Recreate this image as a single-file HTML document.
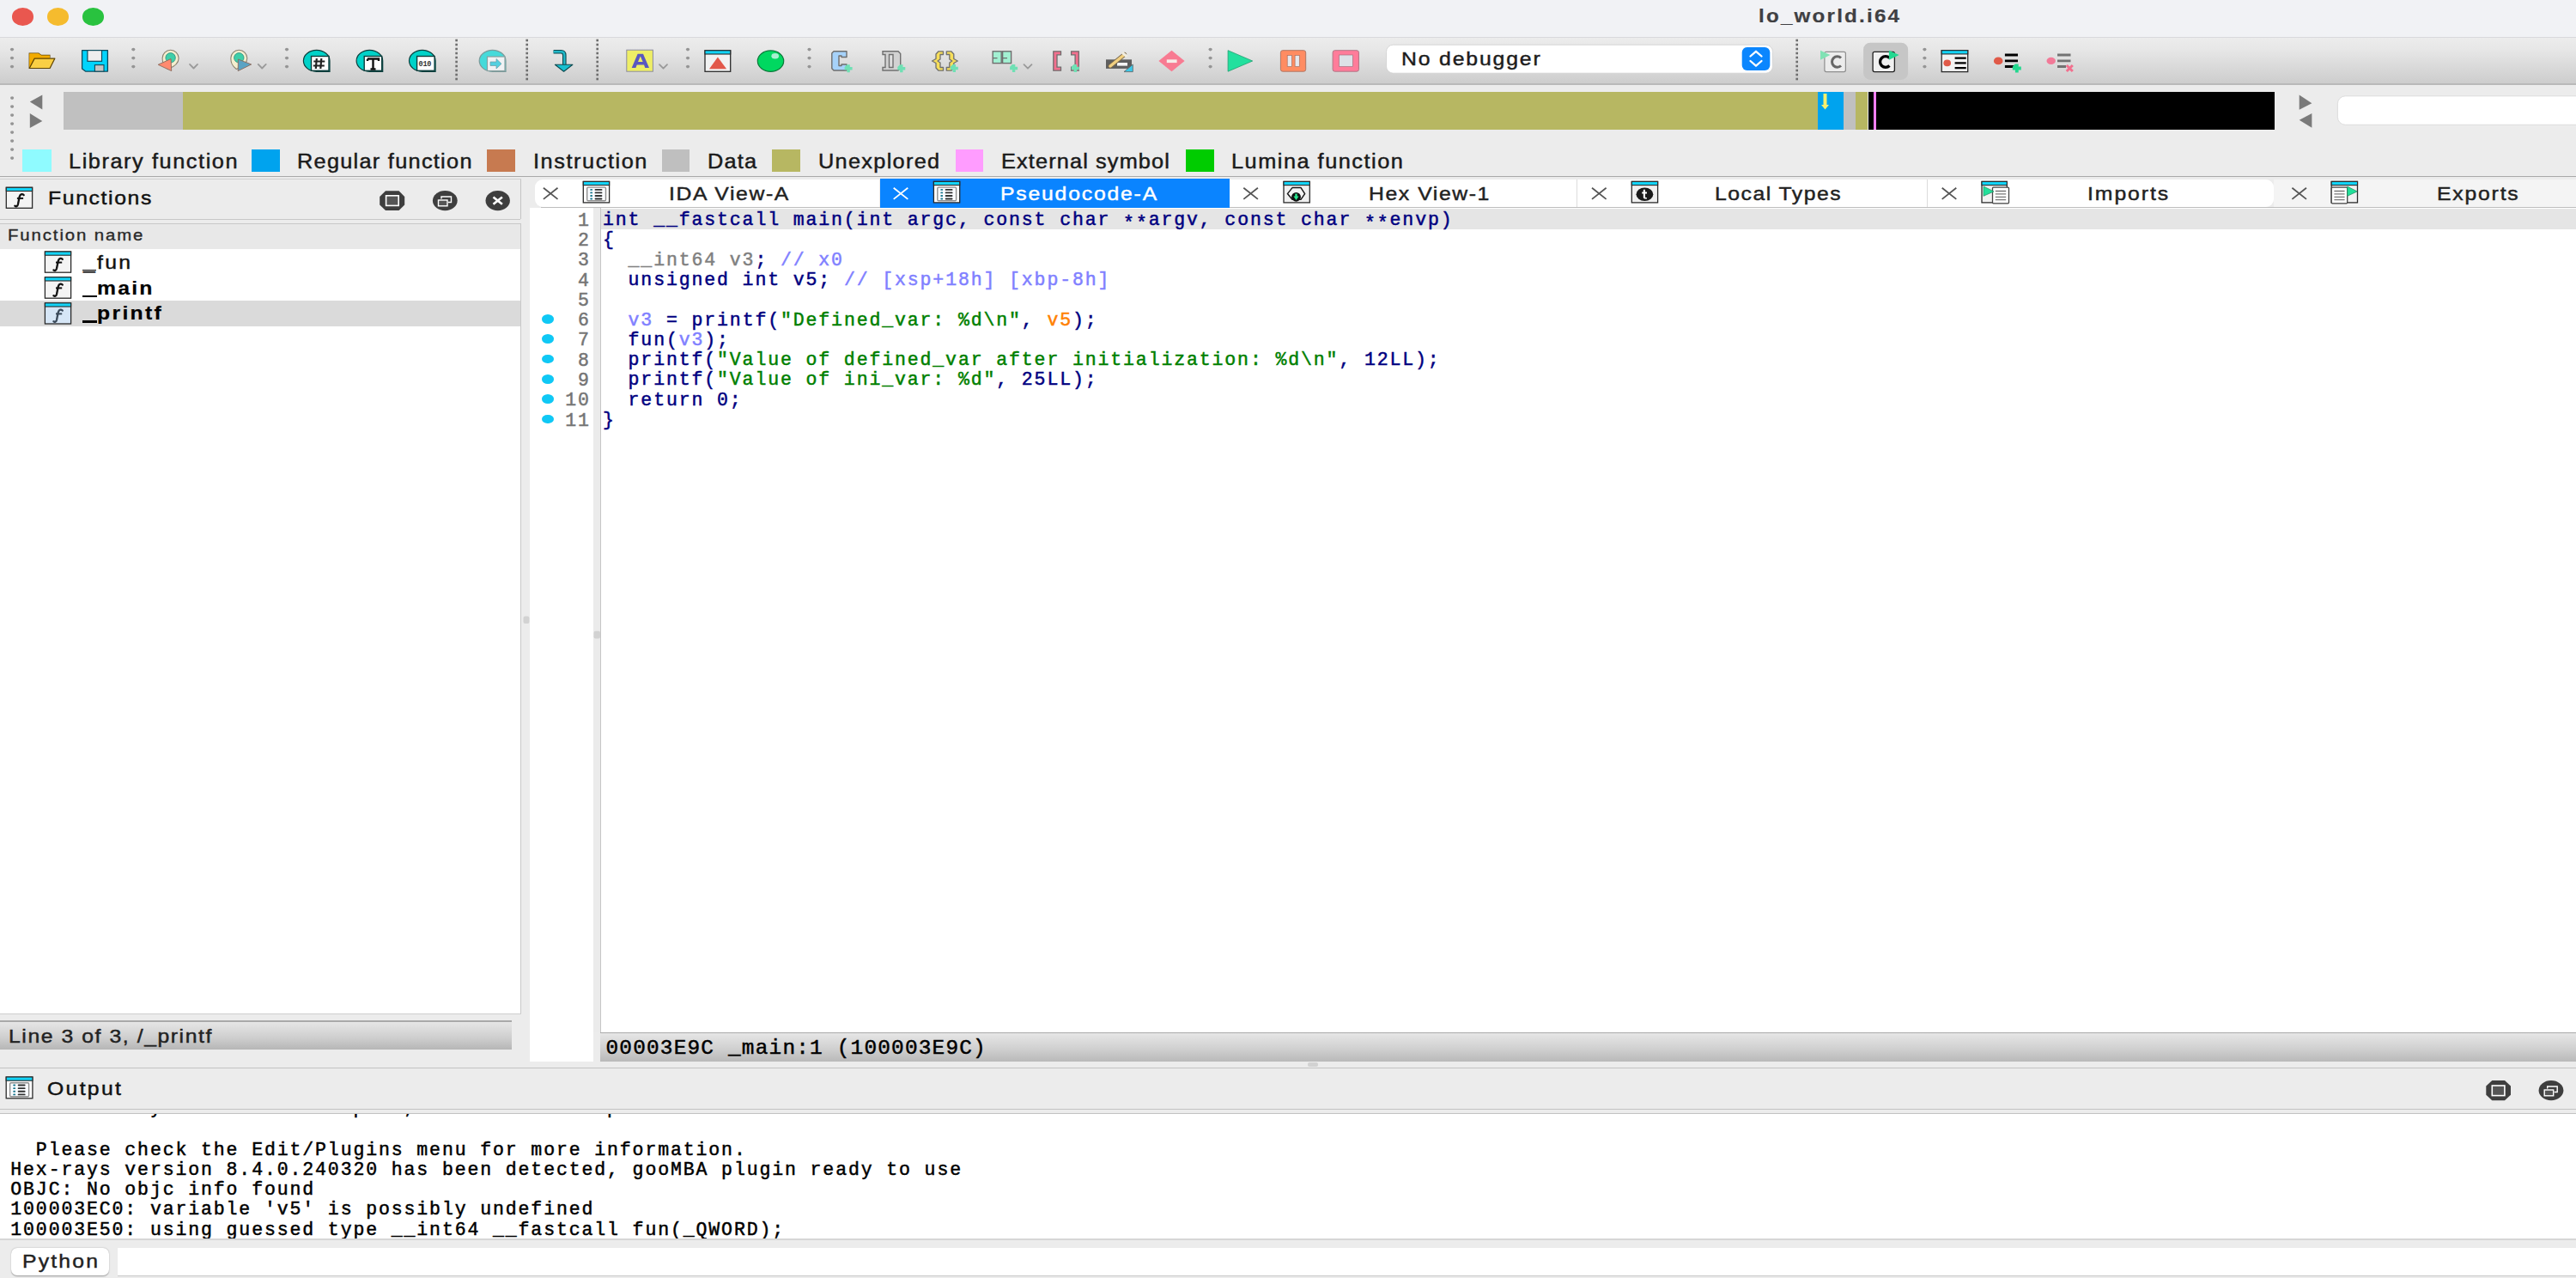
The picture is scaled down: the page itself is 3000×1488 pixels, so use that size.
<!DOCTYPE html><html><head><meta charset="utf-8"><style>
html,body{margin:0;padding:0;width:3000px;height:1488px;overflow:hidden;background:#ececec}
.r,.t{position:absolute}
.t{white-space:pre;margin:0;padding:0}
.code{font:normal 21.50px/21.50px "Liberation Mono", monospace;letter-spacing:1.880px;-webkit-text-stroke:0.5px}
</style></head><body>
<div class="r" style="left:0.0px;top:0.0px;width:3000.0px;height:44.0px;background:#f1f2f5;"></div>
<div class="r" style="left:0.0px;top:43.0px;width:3000.0px;height:1.0px;background:#d9d9dc;"></div>
<div class="r" style="left:14.2px;top:9.2px;width:24.8px;height:20.4px;border-radius:50%;background:#e9574f"></div>
<div class="r" style="left:55.1px;top:9.2px;width:24.8px;height:20.4px;border-radius:50%;background:#f5bb2e"></div>
<div class="r" style="left:96.1px;top:9.2px;width:24.8px;height:20.4px;border-radius:50%;background:#29c23f"></div>
<div class="t" style="left:2048.40px;top:8.18px;font:bold 22.00px/22.00px 'Liberation Sans', sans-serif;color:#3f4043;letter-spacing:2.000px;transform:scaleX(1.1000);transform-origin:0 0;-webkit-text-stroke:0.20px #3f4043;">lo_world.i64</div>
<div class="r" style="left:0.0px;top:44.0px;width:3000.0px;height:53.2px;background:linear-gradient(#ececec,#e7e7e7 25%,#cdcdcd 100%);"></div>
<div class="r" style="left:0.0px;top:97.2px;width:3000.0px;height:1.4px;background:#b9b9b9;"></div>
<div class="r" style="left:0.0px;top:98.6px;width:3000.0px;height:106.4px;background:#ececec;"></div>
<div class="r" style="left:74.0px;top:107.0px;width:139.3px;height:44.0px;background:#c0c0c0;"></div>
<div class="r" style="left:213.3px;top:107.0px;width:1903.3px;height:44.0px;background:#b7b762;"></div>
<div class="r" style="left:2116.6px;top:107.0px;width:30.7px;height:44.0px;background:#00a3ee;"></div>
<div class="r" style="left:2147.3px;top:107.0px;width:14.1px;height:44.0px;background:#c0c0c0;"></div>
<div class="r" style="left:2161.4px;top:107.0px;width:14.1px;height:44.0px;background:#b7b762;"></div>
<div class="r" style="left:2175.5px;top:107.0px;width:473.5px;height:44.0px;background:#000000;"></div>
<div class="r" style="left:2182.0px;top:107.0px;width:2.5px;height:44.0px;background:#ff80ff;"></div>
<div class="r" style="left:26.4px;top:173.8px;width:33.4px;height:25.8px;background:#8ffbff;"></div>
<div class="t" style="left:79.70px;top:176.93px;font:normal 23.00px/23.00px 'Liberation Sans', sans-serif;color:#1a1a1a;letter-spacing:1.430px;transform:scaleX(1.1000);transform-origin:0 0;-webkit-text-stroke:0.45px #1a1a1a;">Library function</div>
<div class="r" style="left:293.0px;top:173.8px;width:32.5px;height:25.8px;background:#00a3ee;"></div>
<div class="t" style="left:346.00px;top:176.93px;font:normal 23.00px/23.00px 'Liberation Sans', sans-serif;color:#1a1a1a;letter-spacing:1.164px;transform:scaleX(1.1000);transform-origin:0 0;-webkit-text-stroke:0.45px #1a1a1a;">Regular function</div>
<div class="r" style="left:567.0px;top:173.8px;width:33.4px;height:25.8px;background:#c77a50;"></div>
<div class="t" style="left:620.70px;top:176.93px;font:normal 23.00px/23.00px 'Liberation Sans', sans-serif;color:#1a1a1a;letter-spacing:1.427px;transform:scaleX(1.1000);transform-origin:0 0;-webkit-text-stroke:0.45px #1a1a1a;">Instruction</div>
<div class="r" style="left:770.8px;top:173.8px;width:32.4px;height:25.8px;background:#bfbfbf;"></div>
<div class="t" style="left:823.50px;top:176.93px;font:normal 23.00px/23.00px 'Liberation Sans', sans-serif;color:#1a1a1a;letter-spacing:1.091px;transform:scaleX(1.1000);transform-origin:0 0;-webkit-text-stroke:0.45px #1a1a1a;">Data</div>
<div class="r" style="left:899.3px;top:173.8px;width:32.9px;height:25.8px;background:#b7b762;"></div>
<div class="t" style="left:952.50px;top:176.93px;font:normal 23.00px/23.00px 'Liberation Sans', sans-serif;color:#1a1a1a;letter-spacing:1.182px;transform:scaleX(1.1000);transform-origin:0 0;-webkit-text-stroke:0.45px #1a1a1a;">Unexplored</div>
<div class="r" style="left:1112.8px;top:173.8px;width:32.0px;height:25.8px;background:#ff9cff;"></div>
<div class="t" style="left:1166.00px;top:176.93px;font:normal 23.00px/23.00px 'Liberation Sans', sans-serif;color:#1a1a1a;letter-spacing:1.032px;transform:scaleX(1.1000);transform-origin:0 0;-webkit-text-stroke:0.45px #1a1a1a;">External symbol</div>
<div class="r" style="left:1380.5px;top:173.8px;width:33.3px;height:25.8px;background:#00cc00;"></div>
<div class="t" style="left:1434.00px;top:176.93px;font:normal 23.00px/23.00px 'Liberation Sans', sans-serif;color:#1a1a1a;letter-spacing:1.377px;transform:scaleX(1.1000);transform-origin:0 0;-webkit-text-stroke:0.45px #1a1a1a;">Lumina function</div>
<div class="r" style="left:0.0px;top:205.0px;width:3000.0px;height:1038.0px;background:#ececec;"></div>
<div class="r" style="left:0.0px;top:205.0px;width:3000.0px;height:1.2px;background:#a9a9a9;"></div>
<div class="r" style="left:606.0px;top:207.5px;width:1.0px;height:47.5px;background:#c4c4c4;"></div>
<div class="r" style="left:0.0px;top:207.5px;width:607.0px;height:1.0px;background:#d0d0d0;"></div>
<div class="r" style="left:606.0px;top:260.4px;width:1.0px;height:920.6px;background:#c8c8c8;"></div>
<div class="r" style="left:0.0px;top:255.0px;width:606.0px;height:1.0px;background:#c8c8c8;"></div>
<div class="t" style="left:56.00px;top:220.15px;font:normal 22.50px/22.50px 'Liberation Sans', sans-serif;color:#111;letter-spacing:1.477px;transform:scaleX(1.1000);transform-origin:0 0;-webkit-text-stroke:0.45px #111;">Functions</div>
<div class="r" style="left:0.0px;top:260.0px;width:606.0px;height:1.0px;background:#c8c8c8;"></div>
<div class="r" style="left:0.0px;top:261.0px;width:606.0px;height:28.6px;background:#e8e8e8;"></div>
<div class="t" style="left:8.70px;top:265.34px;font:normal 18.50px/18.50px 'Liberation Sans', sans-serif;color:#2a2a2a;letter-spacing:1.727px;transform:scaleX(1.1000);transform-origin:0 0;-webkit-text-stroke:0.35px #2a2a2a;">Function name</div>
<div class="r" style="left:0.0px;top:289.6px;width:606.0px;height:890.4px;background:#ffffff;"></div>
<div class="r" style="left:0.0px;top:1180.0px;width:607.0px;height:1.0px;background:#cfcfcf;"></div>
<div class="r" style="left:0.0px;top:350.1px;width:606.0px;height:29.5px;background:#dadada;"></div>
<div class="t" style="left:97.20px;top:294.85px;font:normal 22.50px/22.50px 'Liberation Sans', sans-serif;color:#111;letter-spacing:2.061px;transform:scaleX(1.1000);transform-origin:0 0;-webkit-text-stroke:0.45px #111;">_fun</div>
<div class="t" style="left:97.20px;top:324.55px;font:bold 22.50px/22.50px 'Liberation Sans', sans-serif;color:#000;letter-spacing:2.000px;transform:scaleX(1.1000);transform-origin:0 0;-webkit-text-stroke:0.20px #000;">_main</div>
<div class="t" style="left:97.20px;top:354.35px;font:bold 22.50px/22.50px 'Liberation Sans', sans-serif;color:#000;letter-spacing:2.091px;transform:scaleX(1.1000);transform-origin:0 0;-webkit-text-stroke:0.20px #000;">_printf</div>
<div class="r" style="left:96.0px;top:313.6px;width:15.8px;height:1.9px;background:#111;"></div>
<div class="r" style="left:96.0px;top:343.5px;width:17.2px;height:2.8px;background:#000;"></div>
<div class="r" style="left:96.0px;top:373.2px;width:17.2px;height:3.0px;background:#000;"></div>
<div class="r" style="left:0.0px;top:1189.5px;width:596.0px;height:32.9px;background:linear-gradient(#e6e6e6,#cdcdcd 60%,#b6b6b6);"></div>
<div class="r" style="left:0.0px;top:1188.0px;width:596.0px;height:1.5px;background:#a9a9a9;"></div>
<div class="t" style="left:9.90px;top:1195.95px;font:normal 22.50px/22.50px 'Liberation Sans', sans-serif;color:#222;letter-spacing:1.423px;transform:scaleX(1.1000);transform-origin:0 0;-webkit-text-stroke:0.45px #222;">Line 3 of 3, /_printf</div>
<div class="r" style="left:630.0px;top:241.0px;width:2370.0px;height:1.0px;background:#bdbdbd;"></div>
<div class="r" style="left:622.7px;top:209px;width:401.8px;height:32px;background:#fff;border-radius:9px 0 0 9px"></div>
<div class="r" style="left:1024.5px;top:208.2px;width:407.1px;height:33.8px;background:#0a84ff;"></div>
<div class="r" style="left:1431.6px;top:209.0px;width:812.4px;height:32.0px;background:#ffffff;"></div>
<div class="r" style="left:2244px;top:209px;width:404.0px;height:32px;background:#fff;border-radius:0 9px 9px 0"></div>
<div class="r" style="left:2648.0px;top:209.0px;width:352.0px;height:32.0px;background:#f4f4f4;"></div>
<div class="r" style="left:1836.0px;top:209.0px;width:1.0px;height:32.0px;background:#dcdcdc;"></div>
<div class="r" style="left:2244.0px;top:209.0px;width:1.0px;height:32.0px;background:#dcdcdc;"></div>
<div class="t" style="left:779.00px;top:214.55px;font:normal 22.50px/22.50px 'Liberation Sans', sans-serif;color:#222;letter-spacing:1.475px;transform:scaleX(1.1000);transform-origin:0 0;-webkit-text-stroke:0.45px #222;">IDA View-A</div>
<div class="t" style="left:1165.00px;top:214.55px;font:normal 22.50px/22.50px 'Liberation Sans', sans-serif;color:#fff;letter-spacing:1.636px;transform:scaleX(1.1000);transform-origin:0 0;-webkit-text-stroke:0.45px #fff;">Pseudocode-A</div>
<div class="t" style="left:1594.00px;top:214.55px;font:normal 22.50px/22.50px 'Liberation Sans', sans-serif;color:#222;letter-spacing:1.434px;transform:scaleX(1.1000);transform-origin:0 0;-webkit-text-stroke:0.45px #222;">Hex View-1</div>
<div class="t" style="left:1996.50px;top:214.55px;font:normal 22.50px/22.50px 'Liberation Sans', sans-serif;color:#222;letter-spacing:1.364px;transform:scaleX(1.1000);transform-origin:0 0;-webkit-text-stroke:0.45px #222;">Local Types</div>
<div class="t" style="left:2430.80px;top:214.55px;font:normal 22.50px/22.50px 'Liberation Sans', sans-serif;color:#222;letter-spacing:1.773px;transform:scaleX(1.1000);transform-origin:0 0;-webkit-text-stroke:0.45px #222;">Imports</div>
<div class="t" style="left:2838.40px;top:214.55px;font:normal 22.50px/22.50px 'Liberation Sans', sans-serif;color:#222;letter-spacing:1.636px;transform:scaleX(1.1000);transform-origin:0 0;-webkit-text-stroke:0.45px #222;">Exports</div>
<div class="r" style="left:617.0px;top:242.0px;width:74.0px;height:994.0px;background:#ffffff;"></div>
<div class="r" style="left:691.0px;top:242.0px;width:8.0px;height:960.0px;background:#ebebeb;"></div>
<div class="r" style="left:699.0px;top:242.0px;width:1.0px;height:960.0px;background:#c6c6c6;"></div>
<div class="r" style="left:700.0px;top:242.0px;width:2300.0px;height:960.0px;background:#ffffff;"></div>
<div class="r" style="left:700.0px;top:243.0px;width:2300.0px;height:23.6px;background:#e5e5e5;"></div>
<div class="t code" style="left:702px;top:246.03px"><span style="color:#000080">int __fastcall main(int argc, const char <span style="position:relative;top:4.3px">*</span><span style="position:relative;top:4.3px">*</span>argv, const char <span style="position:relative;top:4.3px">*</span><span style="position:relative;top:4.3px">*</span>envp)</span></div>
<div class="t code" style="left:673.10px;top:246.63px;color:#757575">1</div>
<div class="t code" style="left:702px;top:269.33px"><span style="color:#000080">{</span></div>
<div class="t code" style="left:673.10px;top:269.93px;color:#757575">2</div>
<div class="t code" style="left:702px;top:292.63px"><span style="color:#808080">  __int64 v3</span><span style="color:#000080">;</span><span style="color:#8080ff"> // x0</span></div>
<div class="t code" style="left:673.10px;top:293.23px;color:#757575">3</div>
<div class="t code" style="left:702px;top:315.93px"><span style="color:#000080">  unsigned int v5; </span><span style="color:#8080ff">// [xsp+18h] [xbp-8h]</span></div>
<div class="t code" style="left:673.10px;top:316.53px;color:#757575">4</div>
<div class="t code" style="left:702px;top:339.23px"></div>
<div class="t code" style="left:673.10px;top:339.83px;color:#757575">5</div>
<div class="t code" style="left:702px;top:362.53px"><span style="color:#000080">  </span><span style="color:#8080ff">v3</span><span style="color:#000080"> = printf(</span><span style="color:#008000">"Defined_var: %d\n"</span><span style="color:#000080">, </span><span style="color:#ff8000">v5</span><span style="color:#000080">);</span></div>
<div class="t code" style="left:673.10px;top:363.13px;color:#757575">6</div>
<div class="r" style="left:630.5px;top:366.1px;width:14px;height:10.6px;border-radius:50%;background:#0fc8f5"></div>
<div class="t code" style="left:702px;top:385.83px"><span style="color:#000080">  fun(</span><span style="color:#8080ff">v3</span><span style="color:#000080">);</span></div>
<div class="t code" style="left:673.10px;top:386.43px;color:#757575">7</div>
<div class="r" style="left:630.5px;top:389.4px;width:14px;height:10.6px;border-radius:50%;background:#0fc8f5"></div>
<div class="t code" style="left:702px;top:409.13px"><span style="color:#000080">  printf(</span><span style="color:#008000">"Value of defined_var after initialization: %d\n"</span><span style="color:#000080">, 12LL);</span></div>
<div class="t code" style="left:673.10px;top:409.73px;color:#757575">8</div>
<div class="r" style="left:630.5px;top:412.7px;width:14px;height:10.6px;border-radius:50%;background:#0fc8f5"></div>
<div class="t code" style="left:702px;top:432.43px"><span style="color:#000080">  printf(</span><span style="color:#008000">"Value of ini_var: %d"</span><span style="color:#000080">, 25LL);</span></div>
<div class="t code" style="left:673.10px;top:433.03px;color:#757575">9</div>
<div class="r" style="left:630.5px;top:436.0px;width:14px;height:10.6px;border-radius:50%;background:#0fc8f5"></div>
<div class="t code" style="left:702px;top:455.73px"><span style="color:#000080">  return 0;</span></div>
<div class="t code" style="left:658.32px;top:456.33px;color:#757575">10</div>
<div class="r" style="left:630.5px;top:459.3px;width:14px;height:10.6px;border-radius:50%;background:#0fc8f5"></div>
<div class="t code" style="left:702px;top:479.03px"><span style="color:#000080">}</span></div>
<div class="t code" style="left:658.32px;top:479.63px;color:#757575">11</div>
<div class="r" style="left:630.5px;top:482.6px;width:14px;height:10.6px;border-radius:50%;background:#0fc8f5"></div>
<div class="r" style="left:699.0px;top:1202.0px;width:2301.0px;height:1.0px;background:#a9a9a9;"></div>
<div class="r" style="left:699.0px;top:1203.0px;width:2301.0px;height:33.0px;background:linear-gradient(#e6e6e6,#d0d0d0 55%,#b9b9b9);"></div>
<div class="t" style="left:705.50px;top:1208.81px;font:normal 24.40px/24.40px 'Liberation Mono', monospace;color:#000;letter-spacing:1.200px;-webkit-text-stroke:0.50px #000;">00003E9C _main:1 (100003E9C)</div>
<div class="r" style="left:0.0px;top:1242.5px;width:3000.0px;height:1.0px;background:#c2c2c2;"></div>
<div class="r" style="left:0.0px;top:1243.5px;width:3000.0px;height:47.5px;background:#ececec;"></div>
<div class="r" style="left:0.0px;top:1291.0px;width:3000.0px;height:1.0px;background:#c2c2c2;"></div>
<div class="r" style="left:0.0px;top:1296.0px;width:3000.0px;height:1.0px;background:#c2c2c2;"></div>
<div class="r" style="left:0.0px;top:1297.0px;width:3000.0px;height:145.0px;background:#ffffff;"></div>
<div class="t" style="left:55.00px;top:1257.25px;font:normal 22.50px/22.50px 'Liberation Sans', sans-serif;color:#111;letter-spacing:2.109px;transform:scaleX(1.1000);transform-origin:0 0;-webkit-text-stroke:0.45px #111;">Output</div>
<div class="t code" style="left:12.3px;top:1328.53px;color:#000">  Please check the Edit/Plugins menu for more information.</div>
<div class="t code" style="left:12.3px;top:1351.83px;color:#000">Hex-rays version 8.4.0.240320 has been detected, gooMBA plugin ready to use</div>
<div class="t code" style="left:12.3px;top:1375.13px;color:#000">OBJC: No objc info found</div>
<div class="t code" style="left:12.3px;top:1398.43px;color:#000">100003EC0: variable 'v5' is possibly undefined</div>
<div class="t code" style="left:12.3px;top:1421.73px;color:#000">100003E50: using guessed type __int64 __fastcall fun(_QWORD);</div>
<div class="r" style="left:0;top:1297px;width:3000px;height:10px;overflow:hidden"><div class="t code" style="left:12.3px;top:-16.97px;color:#000">  The hotkeys are F5: decompile, Ctrl-F5: decompile all.</div></div>
<div class="r" style="left:0.0px;top:1443.5px;width:3000.0px;height:44.5px;background:#ececec;"></div>
<div class="r" style="left:0.0px;top:1442.0px;width:3000.0px;height:1.5px;background:#d6d6d6;"></div>
<div class="r" style="left:12.6px;top:1453px;width:114px;height:32px;background:#fff;border-radius:7px;box-shadow:0 0.5px 1.5px rgba(0,0,0,.35)"></div>
<div class="t" style="left:25.50px;top:1457.95px;font:normal 22.50px/22.50px 'Liberation Sans', sans-serif;color:#222;letter-spacing:2.000px;transform:scaleX(1.1000);transform-origin:0 0;-webkit-text-stroke:0.45px #222;">Python</div>
<div class="r" style="left:137.4px;top:1452.5px;width:2862.6px;height:32.5px;background:#ffffff;"></div>
<div class="r" style="left:137.4px;top:1485.0px;width:2862.6px;height:1.0px;background:#c8c8c8;"></div>
<svg class="r" style="left:0;top:0" width="3000" height="1488" viewBox="0 0 3000 1488"><ellipse cx="14.0" cy="57.6" rx="2.1" ry="1.8" fill="#959595"/><ellipse cx="14.0" cy="67.6" rx="2.1" ry="1.8" fill="#959595"/><ellipse cx="14.0" cy="77.6" rx="2.1" ry="1.8" fill="#959595"/><path d="M34.2 79.5 V62.2 H45 L48 64.4 H57.9 V67.4" fill="#f2ab00" stroke="#5e4300" stroke-width="1.2"/><path d="M34.2 62.2 H45 L48 64.4 H57.9 V68 H40 L34.2 79.5 Z" fill="#f2ab00"/><path d="M40.2 68.1 H63.9 L58.1 79.5 H34.2 Z" fill="#f9cf45" stroke="#5e4300" stroke-width="1.2" stroke-linejoin="round"/><path d="M95.6 58.6 H125.4 V83.1 H99.5 L95.6 80 Z" fill="#00d4fc" stroke="#0b4a5c" stroke-width="1.3" stroke-linejoin="round"/><rect x="101.9" y="58.6" width="16.6" height="12.7" fill="#eeeeee" stroke="#0b4a5c" stroke-width="1.2"/><rect x="110.4" y="75.6" width="10.6" height="7.5" fill="#c4c4c4" stroke="#0b4a5c" stroke-width="1.1"/><ellipse cx="155.3" cy="57.6" rx="2.1" ry="1.8" fill="#959595"/><ellipse cx="155.3" cy="67.6" rx="2.1" ry="1.8" fill="#959595"/><ellipse cx="155.3" cy="77.6" rx="2.1" ry="1.8" fill="#959595"/><path d="M195.6 80.5 C190.1 76.5 189.1 73 189.1 67.8 A9.5 9.5 0 1 1 208.1 67.8 C208.1 73 205.1 77 195.6 80.5 Z" fill="#f4efcf" stroke="#8a8070" stroke-width="1.1"/><circle cx="198.6" cy="67.3" r="5.7" fill="#3fcfa8" stroke="#2a8a80" stroke-width="0.8"/><path d="M184.2 75.3 L199 68.5 L199.7 82.6 Z" fill="#ff8a70" stroke="#8a6a5a" stroke-width="0.9" stroke-linejoin="round"/><path d="M275.3 80.5 C269.8 76.5 268.8 73 268.8 67.8 A9.5 9.5 0 1 1 287.8 67.8 C287.8 73 284.8 77 275.3 80.5 Z" fill="#f4efcf" stroke="#8a8070" stroke-width="1.1"/><circle cx="278.3" cy="67.3" r="5.7" fill="#3fcfa8" stroke="#2a8a80" stroke-width="0.8"/><path d="M277.4 69 L292.7 75 L277.2 82.6 Z" fill="#5aa3c4" stroke="#8a6a5a" stroke-width="0.9" stroke-linejoin="round"/><path d="M221.0 74.9 L225.5 79.5 L230.0 74.9" stroke="#9a9a9a" stroke-width="1.8" fill="none" stroke-linecap="round" stroke-linejoin="round"/><path d="M300.7 74.9 L305.2 79.5 L309.7 74.9" stroke="#9a9a9a" stroke-width="1.8" fill="none" stroke-linecap="round" stroke-linejoin="round"/><ellipse cx="334.0" cy="57.6" rx="2.1" ry="1.8" fill="#959595"/><ellipse cx="334.0" cy="67.6" rx="2.1" ry="1.8" fill="#959595"/><ellipse cx="334.0" cy="77.6" rx="2.1" ry="1.8" fill="#959595"/><path d="M384.0 83.3 L368.6 83.3 A15.3 12.5 0 1 1 384.0 70.8 Z" fill="#00d2c8" stroke="#0d3e3c" stroke-width="1.2"/><rect x="362.5" y="65.5" width="20.5" height="16.8" fill="#fff" stroke="#0d3e3c" stroke-width="1.4"/><path d="M368.8 68 L367.8 80 M374.3 68 L373.3 80 M365.3 71.5 H378.3 M364.8 76.5 H377.8" stroke="#222" stroke-width="2.2"/><path d="M445.7 83.3 L430.4 83.3 A15.3 12.5 0 1 1 445.7 70.8 Z" fill="#00d2c8" stroke="#0d3e3c" stroke-width="1.2"/><rect x="424.2" y="65.5" width="20.5" height="16.8" fill="#fff" stroke="#0d3e3c" stroke-width="1.4"/><path d="M428.0 68.5 H441.0 V71 M428.0 68.5 V71 M434.5 68.5 V80.5 M431.5 80.5 H437.5" stroke="#111" stroke-width="2.4" fill="none"/><path d="M507.1 83.3 L491.8 83.3 A15.3 12.5 0 1 1 507.1 70.8 Z" fill="#00d2c8" stroke="#0d3e3c" stroke-width="1.2"/><rect x="485.6" y="65.5" width="20.5" height="16.8" fill="#fff" stroke="#0d3e3c" stroke-width="1.4"/><text x="487.6" y="77.4" font-family="Liberation Mono" font-weight="bold" font-size="8.5" fill="#333" letter-spacing="-0.3">010</text><rect x="530.3" y="45.7" width="2.6" height="2.6" fill="#6e6e6e"/><rect x="530.3" y="50.7" width="2.6" height="2.6" fill="#6e6e6e"/><rect x="530.3" y="55.7" width="2.6" height="2.6" fill="#6e6e6e"/><rect x="530.3" y="60.7" width="2.6" height="2.6" fill="#6e6e6e"/><rect x="530.3" y="65.7" width="2.6" height="2.6" fill="#6e6e6e"/><rect x="530.3" y="70.7" width="2.6" height="2.6" fill="#6e6e6e"/><rect x="530.3" y="75.7" width="2.6" height="2.6" fill="#6e6e6e"/><rect x="530.3" y="80.7" width="2.6" height="2.6" fill="#6e6e6e"/><rect x="530.3" y="85.7" width="2.6" height="2.6" fill="#6e6e6e"/><rect x="530.3" y="90.7" width="2.6" height="2.6" fill="#6e6e6e"/><path d="M589.0 83.3 L573.6 83.3 A15.4 12.5 0 1 1 589.0 70.8 Z" fill="#45dada" stroke="#7a9a9a" stroke-width="1.2"/><rect x="567.5" y="66" width="20.5" height="16.5" fill="#f0f2f4" stroke="#8aa0a0" stroke-width="1.2"/><path d="M571 72 H578 V68.5 L584 74.3 L578 80 V76.5 H571 Z" fill="#52d0e0" stroke="#6a9aa0" stroke-width="0.7"/><rect x="612.4" y="45.7" width="2.6" height="2.6" fill="#6e6e6e"/><rect x="612.4" y="50.7" width="2.6" height="2.6" fill="#6e6e6e"/><rect x="612.4" y="55.7" width="2.6" height="2.6" fill="#6e6e6e"/><rect x="612.4" y="60.7" width="2.6" height="2.6" fill="#6e6e6e"/><rect x="612.4" y="65.7" width="2.6" height="2.6" fill="#6e6e6e"/><rect x="612.4" y="70.7" width="2.6" height="2.6" fill="#6e6e6e"/><rect x="612.4" y="75.7" width="2.6" height="2.6" fill="#6e6e6e"/><rect x="612.4" y="80.7" width="2.6" height="2.6" fill="#6e6e6e"/><rect x="612.4" y="85.7" width="2.6" height="2.6" fill="#6e6e6e"/><rect x="612.4" y="90.7" width="2.6" height="2.6" fill="#6e6e6e"/><path d="M644.6 60.3 H653.5 Q657.3 60.3 657.3 64.5 V75.3" stroke="#0d4a50" stroke-width="4.6" fill="none"/><path d="M644.6 60.3 H653.5 Q657.3 60.3 657.3 64.5 V76" stroke="#20b8c8" stroke-width="2.4" fill="none"/><path d="M646.4 75.3 H666.9 L656.6 83.3 Z" fill="#18c0d0" stroke="#0d4a50" stroke-width="1.1" stroke-linejoin="round"/><rect x="694.4" y="45.7" width="2.6" height="2.6" fill="#6e6e6e"/><rect x="694.4" y="50.7" width="2.6" height="2.6" fill="#6e6e6e"/><rect x="694.4" y="55.7" width="2.6" height="2.6" fill="#6e6e6e"/><rect x="694.4" y="60.7" width="2.6" height="2.6" fill="#6e6e6e"/><rect x="694.4" y="65.7" width="2.6" height="2.6" fill="#6e6e6e"/><rect x="694.4" y="70.7" width="2.6" height="2.6" fill="#6e6e6e"/><rect x="694.4" y="75.7" width="2.6" height="2.6" fill="#6e6e6e"/><rect x="694.4" y="80.7" width="2.6" height="2.6" fill="#6e6e6e"/><rect x="694.4" y="85.7" width="2.6" height="2.6" fill="#6e6e6e"/><rect x="694.4" y="90.7" width="2.6" height="2.6" fill="#6e6e6e"/><rect x="729.8" y="58.2" width="30.6" height="25" fill="#eeee66" stroke="#8a8aa0" stroke-width="1"/><path d="M735.7 79 L742.6 62.8 H749 L756 79 H751.3 L750 75.6 H741.7 L740.4 79 Z M743 72 H748.6 L745.8 65.6 Z" fill="#5a58c0" fill-rule="evenodd"/><path d="M768.0 75.1 L772.5 79.7 L777.0 75.1" stroke="#9a9a9a" stroke-width="1.8" fill="none" stroke-linecap="round" stroke-linejoin="round"/><ellipse cx="801.0" cy="57.6" rx="2.1" ry="1.8" fill="#959595"/><ellipse cx="801.0" cy="67.6" rx="2.1" ry="1.8" fill="#959595"/><ellipse cx="801.0" cy="77.6" rx="2.1" ry="1.8" fill="#959595"/><rect x="821.0" y="58.8" width="29.7" height="24.5" fill="#f2f2f2" stroke="#2a2a2a" stroke-width="1.3"/><rect x="821.0" y="58.8" width="29.7" height="4.2" fill="#12d4f8" stroke="#2a2a2a" stroke-width="1.1"/><path d="M826 80.3 L835.9 66.4 L846.1 80.3 Z" fill="#e2584a"/><ellipse cx="897.5" cy="71.1" rx="15.2" ry="12.2" fill="#00d860" stroke="#0a7a3a" stroke-width="1.2"/><ellipse cx="902.7" cy="65.3" rx="4.3" ry="3.2" fill="#a8f0d0"/><ellipse cx="942.5" cy="57.6" rx="2.1" ry="1.8" fill="#959595"/><ellipse cx="942.5" cy="67.6" rx="2.1" ry="1.8" fill="#959595"/><ellipse cx="942.5" cy="77.6" rx="2.1" ry="1.8" fill="#959595"/><path d="M968.8 62 L971 59.8 H986 V66.5 H980 V65 H977 V76.5 H980 V75 H986 V82 H971 L968.8 79.8 Z" fill="#a6d2fa" stroke="#6e6e6e" stroke-width="1.4" stroke-linejoin="round"/><path d="M986.4 75.2 h3.4 v2.8 h2.8 v3.4 h-2.8 v2.8 h-3.4 v-2.8 h-2.8 v-3.4 z" fill="#6fe0b4"/><path d="M1028 59.8 H1046 L1048.7 62.5 V79.5 L1046 82 H1028 V78.5 H1031 V63.5 H1028 Z M1035.5 63.5 V78.5 H1040 V63.5 Z" fill="#d2d2d2" stroke="#707070" stroke-width="1.4" fill-rule="evenodd"/><path d="M1048.1 75.2 h3.4 v2.8 h2.8 v3.4 h-2.8 v2.8 h-3.4 v-2.8 h-2.8 v-3.4 z" fill="#6fe0b4"/><path d="M1093 59.8 H1098.5 V63.5 H1095 V69 L1092 71 L1095 73 V78.5 H1098.5 V82.2 H1093 L1090 79 V73.5 L1085.5 71 L1090 68.5 V63 Z" fill="#f6de5a" stroke="#707070" stroke-width="1.3" stroke-linejoin="round"/><path d="M1107.8 59.8 H1102.3 V63.5 H1105.8 V69 L1108.8 71 L1105.8 73 V78.5 H1102.3 V82.2 H1107.8 L1110.8 79 V73.5 L1115.3 71 L1110.8 68.5 V63 Z" fill="#f6de5a" stroke="#707070" stroke-width="1.3" stroke-linejoin="round"/><path d="M1109.6 75.0 h3.4 v2.8 h2.8 v3.4 h-2.8 v2.8 h-3.4 v-2.8 h-2.8 v-3.4 z" fill="#6fe0b4"/><rect x="1156.2" y="59.8" width="10" height="13.8" fill="#a2f0d2" stroke="#6e6e6e" stroke-width="1.4"/><rect x="1167.6" y="59.8" width="10" height="13.8" fill="#a2f0d2" stroke="#6e6e6e" stroke-width="1.4"/><path d="M1156.2 67.6 H1161.5 M1167.6 67.6 H1173" stroke="#6e6e6e" stroke-width="1.3"/><path d="M1178.9 75.0 h3.4 v2.8 h2.8 v3.4 h-2.8 v2.8 h-3.4 v-2.8 h-2.8 v-3.4 z" fill="#6fe0b4"/><path d="M1192.5 75.1 L1197.0 79.7 L1201.5 75.1" stroke="#9a9a9a" stroke-width="1.8" fill="none" stroke-linecap="round" stroke-linejoin="round"/><path d="M1226.8 59.8 H1235.5 V63.8 H1231 V78.2 H1235.5 V82.2 H1226.8 Z" fill="#f2708e" stroke="#6e6e6e" stroke-width="1.3"/><path d="M1256.3 59.8 H1247.6 V63.8 H1252.1 V78.2 H1247.6 V82.2 H1256.3 Z" fill="#f2708e" stroke="#6e6e6e" stroke-width="1.3"/><path d="M1250.6 75.0 h3.4 v2.8 h2.8 v3.4 h-2.8 v2.8 h-3.4 v-2.8 h-2.8 v-3.4 z" fill="#6fe0b4"/><rect x="1288" y="69.3" width="30" height="10.6" fill="#5e5e5e"/><rect x="1301" y="73" width="12" height="3.6" fill="#f4f4f4"/><path d="M1293 77 L1309.5 63.5" stroke="#7a6a50" stroke-width="5.2" stroke-linecap="round"/><path d="M1293 77 L1309.5 63.5" stroke="#f2d080" stroke-width="3.4" stroke-linecap="round"/><path d="M1307.8 62 L1311.5 65" stroke="#f0ece0" stroke-width="3" stroke-linecap="round"/><path d="M1309 83.6 L1319.3 75 V83.6 Z" fill="#3cc8e8" stroke="#5e5e5e" stroke-width="0.8"/><path d="M1364.5 58.8 L1379.6 71 L1364.5 83.2 L1349.4 71 Z" fill="#f87b92"/><rect x="1358.8" y="69.3" width="11.8" height="3.8" fill="#f6ece8"/><ellipse cx="1409.6" cy="57.6" rx="2.1" ry="1.8" fill="#959595"/><ellipse cx="1409.6" cy="67.6" rx="2.1" ry="1.8" fill="#959595"/><ellipse cx="1409.6" cy="77.6" rx="2.1" ry="1.8" fill="#959595"/><path d="M1430.1 58.7 L1458.7 71 L1430.1 83.2 Z" fill="#22e09e" stroke="#20a070" stroke-width="0.8" stroke-linejoin="round"/><rect x="1491.4" y="58.7" width="29.3" height="24.5" rx="2.5" fill="#ff8c62" stroke="#a87060" stroke-width="0.9"/><rect x="1499.2" y="64.4" width="5.2" height="13.1" fill="#e6e8ee" stroke="#a87060" stroke-width="0.7"/><rect x="1508.1" y="64.4" width="5.2" height="13.1" fill="#e6e8ee" stroke="#a87060" stroke-width="0.7"/><rect x="1552.1" y="58.7" width="30.4" height="24.5" rx="2.5" fill="#ff7c9a" stroke="#a87080" stroke-width="0.9"/><rect x="1559.5" y="64" width="15.9" height="13.5" fill="#dde1e7" stroke="#a87080" stroke-width="0.7"/><rect x="1614.5" y="52.2" width="450" height="33" rx="8" fill="#ffffff" stroke="#cfcfcf" stroke-width="0.8"/><rect x="2028.7" y="55" width="32.6" height="26.9" rx="6" fill="#0b86fe"/><path d="M2038.5 65.5 L2045 59.8 L2051.5 65.5 M2038.5 71 L2045 76.7 L2051.5 71" stroke="#fff" stroke-width="2.3" fill="none" stroke-linecap="round" stroke-linejoin="round"/><rect x="2091.4" y="45.7" width="2.6" height="2.6" fill="#6e6e6e"/><rect x="2091.4" y="50.7" width="2.6" height="2.6" fill="#6e6e6e"/><rect x="2091.4" y="55.7" width="2.6" height="2.6" fill="#6e6e6e"/><rect x="2091.4" y="60.7" width="2.6" height="2.6" fill="#6e6e6e"/><rect x="2091.4" y="65.7" width="2.6" height="2.6" fill="#6e6e6e"/><rect x="2091.4" y="70.7" width="2.6" height="2.6" fill="#6e6e6e"/><rect x="2091.4" y="75.7" width="2.6" height="2.6" fill="#6e6e6e"/><rect x="2091.4" y="80.7" width="2.6" height="2.6" fill="#6e6e6e"/><rect x="2091.4" y="85.7" width="2.6" height="2.6" fill="#6e6e6e"/><rect x="2091.4" y="90.7" width="2.6" height="2.6" fill="#6e6e6e"/><rect x="2124.9" y="60.3" width="24.5" height="23.3" rx="2" fill="#ececec" stroke="#8e8e8e" stroke-width="1.2"/><path d="M2144 67.5 A6.2 6.2 0 1 0 2144 76.5" stroke="#666" stroke-width="3" fill="none"/><path d="M2120 58.7 L2131.4 64 L2120 69.7 Z" fill="#80e2b4"/><rect x="2170.1" y="49.7" width="52" height="43.2" rx="8" fill="#c6c6c6"/><rect x="2181.1" y="60.3" width="25.3" height="23.3" rx="2" fill="#f0f0f0" stroke="#222" stroke-width="1.3"/><path d="M2200.5 67.5 A6.4 6.4 0 1 0 2200.5 76.5" stroke="#000" stroke-width="3.3" fill="none"/><path d="M2199.9 58.7 L2211.7 64 L2199.9 69.7 Z" fill="#22d890"/><ellipse cx="2241.4" cy="57.6" rx="2.1" ry="1.8" fill="#959595"/><ellipse cx="2241.4" cy="67.6" rx="2.1" ry="1.8" fill="#959595"/><ellipse cx="2241.4" cy="77.6" rx="2.1" ry="1.8" fill="#959595"/><rect x="2261.2" y="58.7" width="30.5" height="24.9" fill="#f2f2f2" stroke="#2a2a2a" stroke-width="1.3"/><rect x="2261.2" y="58.7" width="30.5" height="4.2" fill="#12d4f8" stroke="#2a2a2a" stroke-width="1.1"/><ellipse cx="2267.7" cy="73.4" rx="4.3" ry="3.8" fill="#e05a48"/><path d="M2276.6 67.7 H2289.7 M2276.6 73.4 H2289.7 M2276.6 79.1 H2289.7" stroke="#000" stroke-width="2.2"/><ellipse cx="2327.2" cy="70.9" rx="5.3" ry="4.3" fill="#e05a48"/><path d="M2334.9 64 H2350 M2334.9 70.9 H2350 M2334.9 77.5 H2346" stroke="#000" stroke-width="2.8"/><path d="M2346.9 74.5 h3.8 v3.1 h3.1 v3.8 h-3.1 v3.1 h-3.8 v-3.1 h-3.1 v-3.8 z" fill="#22d88e"/><ellipse cx="2388.7" cy="70.9" rx="5.2" ry="4.2" fill="#f27a98"/><path d="M2396 64 H2411.5 M2396 70.9 H2411.5 M2396 77.5 H2406" stroke="#727272" stroke-width="2.8"/><path d="M2406.8 76 L2413.8 83 M2413.8 76 L2406.8 83" stroke="#f2708e" stroke-width="3"/><ellipse cx="14.1" cy="114.1" rx="2.1" ry="1.8" fill="#959595"/><ellipse cx="14.1" cy="124.1" rx="2.1" ry="1.8" fill="#959595"/><ellipse cx="14.1" cy="134.1" rx="2.1" ry="1.8" fill="#959595"/><ellipse cx="14.1" cy="144.1" rx="2.1" ry="1.8" fill="#959595"/><ellipse cx="14.1" cy="154.1" rx="2.1" ry="1.8" fill="#959595"/><ellipse cx="14.1" cy="164.1" rx="2.1" ry="1.8" fill="#959595"/><ellipse cx="14.1" cy="174.1" rx="2.1" ry="1.8" fill="#959595"/><ellipse cx="14.1" cy="184.1" rx="2.1" ry="1.8" fill="#959595"/><path d="M34.8 118.4 L49.3 110.6 V127.4 Z" fill="#7a7a7a"/><path d="M34.8 132.1 L49.3 141.1 L34.8 148.9 Z" fill="#7a7a7a"/><path d="M2677.7 110.4 L2692.4 120.2 L2677.7 127.8 Z" fill="#7a7a7a"/><path d="M2692.4 132 L2677.7 139.7 L2692.4 148.8 Z" fill="#7a7a7a"/><path d="M2123.5 109 H2127.5 V122 H2130 L2125.5 127.6 L2121 122 H2123.5 Z" fill="#f6f070"/><rect x="2722.4" y="111.8" width="300" height="33.5" rx="9" fill="#fff" stroke="#d6d6d6" stroke-width="0.8"/><rect x="7.3" y="218.3" width="30.3" height="24.0" fill="#f4f4f4" stroke="#2a2a2a" stroke-width="1.3"/><rect x="7.3" y="218.3" width="30.3" height="4.2" fill="#12d4f8" stroke="#2a2a2a" stroke-width="1.1"/><path d="M27.7 227.1 C26.7 225.5 23.5 225.7 22.7 229.1 L20.9 237.9 C20.3 240.5 18.5 240.7 17.3 239.7" stroke="#111" stroke-width="2.3" fill="none" stroke-linecap="round"/><path d="M19.9 230.9 H27.1" stroke="#111" stroke-width="2"/><path d="M449 222.2 H464.6 L471.2 229 V238.4 L464.6 245 H449 L442.2 238.4 V229 Z" fill="#3e3e3e"/><rect x="449.6" y="227.8" width="14.6" height="11.6" fill="#555" stroke="#fff" stroke-width="1.6"/><ellipse cx="518.3" cy="233.6" rx="14.4" ry="11.6" fill="#3e3e3e"/><rect x="510.5" y="233" width="10.5" height="6.8" fill="#555" stroke="#fff" stroke-width="1.4"/><path d="M514 231.5 V229 H525.5 V235.5 H522" fill="none" stroke="#fff" stroke-width="1.4"/><ellipse cx="579.7" cy="233.6" rx="14.2" ry="11.6" fill="#3e3e3e"/><path d="M574.5 229.4 L584.9 237.8 M584.9 229.4 L574.5 237.8" stroke="#fff" stroke-width="2.6"/><rect x="52.4" y="293.0" width="30.2" height="24.2" fill="#f4f4f4" stroke="#2a2a2a" stroke-width="1.3"/><rect x="52.4" y="293.0" width="30.2" height="4.2" fill="#12d4f8" stroke="#2a2a2a" stroke-width="1.1"/><path d="M72.8 301.8 C71.8 300.2 68.6 300.4 67.8 303.8 L66.0 312.6 C65.4 315.2 63.6 315.4 62.4 314.4" stroke="#111" stroke-width="2.3" fill="none" stroke-linecap="round"/><path d="M65.0 305.6 H72.2" stroke="#111" stroke-width="2"/><rect x="52.4" y="322.8" width="30.2" height="24.4" fill="#f4f4f4" stroke="#2a2a2a" stroke-width="1.3"/><rect x="52.4" y="322.8" width="30.2" height="4.2" fill="#12d4f8" stroke="#2a2a2a" stroke-width="1.1"/><path d="M72.8 331.6 C71.8 330.0 68.6 330.2 67.8 333.6 L66.0 342.4 C65.4 345.0 63.6 345.2 62.4 344.2" stroke="#111" stroke-width="2.3" fill="none" stroke-linecap="round"/><path d="M65.0 335.4 H72.2" stroke="#111" stroke-width="2"/><rect x="52.4" y="352.8" width="30.2" height="24.2" fill="#d6e6f6" stroke="#2a2a2a" stroke-width="1.3"/><rect x="52.4" y="352.8" width="30.2" height="4.2" fill="#12d4f8" stroke="#2a2a2a" stroke-width="1.1"/><path d="M72.8 361.6 C71.8 360.0 68.6 360.2 67.8 363.6 L66.0 372.4 C65.4 375.0 63.6 375.2 62.4 374.2" stroke="#3a4a5a" stroke-width="2.3" fill="none" stroke-linecap="round"/><path d="M65.0 365.4 H72.2" stroke="#3a4a5a" stroke-width="2"/><path d="M632.9 218.7 L649.5 231.9 M649.5 218.7 L632.9 231.9" stroke="#555" stroke-width="1.8"/><rect x="679.3" y="211.4" width="30.3" height="24.5" fill="#ffffff" stroke="#2a2a2a" stroke-width="1.3"/><rect x="679.3" y="211.4" width="30.3" height="4.2" fill="#12d4f8" stroke="#2a2a2a" stroke-width="1.1"/><rect x="683.7" y="218.1" width="21.8" height="15.7" rx="1.2" fill="#fafcff" stroke="#8e8e8e" stroke-width="1.4"/><rect x="687.2" y="219.9" width="2.9" height="1.9" rx="0.9" fill="#1f7a90"/><rect x="692.6" y="219.9" width="8.8" height="1.9" rx="0.9" fill="#333"/><rect x="687.2" y="223.4" width="2.9" height="1.9" rx="0.9" fill="#1f7a90"/><rect x="692.6" y="223.4" width="8.8" height="1.9" rx="0.9" fill="#333"/><rect x="687.2" y="227.0" width="2.9" height="1.9" rx="0.9" fill="#1f7a90"/><rect x="692.6" y="227.0" width="8.8" height="1.9" rx="0.9" fill="#333"/><rect x="687.2" y="230.5" width="2.9" height="1.9" rx="0.9" fill="#1f7a90"/><rect x="692.6" y="230.5" width="8.8" height="1.9" rx="0.9" fill="#333"/><path d="M1040.7 218.7 L1057.3 231.9 M1057.3 218.7 L1040.7 231.9" stroke="#fff" stroke-width="1.8"/><rect x="1087.4" y="211.4" width="30.3" height="24.5" fill="#ffffff" stroke="#2a2a2a" stroke-width="1.3"/><rect x="1087.4" y="211.4" width="30.3" height="4.2" fill="#12d4f8" stroke="#2a2a2a" stroke-width="1.1"/><rect x="1091.8" y="218.1" width="21.8" height="15.7" rx="1.2" fill="#fafcff" stroke="#8e8e8e" stroke-width="1.4"/><rect x="1095.3" y="219.9" width="2.9" height="1.9" rx="0.9" fill="#1f7a90"/><rect x="1100.7" y="219.9" width="8.8" height="1.9" rx="0.9" fill="#333"/><rect x="1095.3" y="223.4" width="2.9" height="1.9" rx="0.9" fill="#1f7a90"/><rect x="1100.7" y="223.4" width="8.8" height="1.9" rx="0.9" fill="#333"/><rect x="1095.3" y="227.0" width="2.9" height="1.9" rx="0.9" fill="#1f7a90"/><rect x="1100.7" y="227.0" width="8.8" height="1.9" rx="0.9" fill="#333"/><rect x="1095.3" y="230.5" width="2.9" height="1.9" rx="0.9" fill="#1f7a90"/><rect x="1100.7" y="230.5" width="8.8" height="1.9" rx="0.9" fill="#333"/><path d="M1448.3 218.7 L1464.9 231.9 M1464.9 218.7 L1448.3 231.9" stroke="#555" stroke-width="1.8"/><rect x="1495.0" y="211.4" width="30.3" height="24.5" fill="#f0f0f0" stroke="#2a2a2a" stroke-width="1.3"/><rect x="1495.0" y="211.4" width="30.3" height="4.2" fill="#12d4f8" stroke="#2a2a2a" stroke-width="1.1"/><path d="M1499.4 225.6 L1505.2 218.4 H1514.9 L1519.6 225.6 L1515.1 232.2 H1505.0 Z" fill="#f4f4f4" stroke="#1a1a1a" stroke-width="1.5" stroke-linejoin="round"/><circle cx="1509.5" cy="229.3" r="5.4" fill="#101010"/><path d="M1508.3 225.5 H1510.7 V228.6 H1512.6 L1509.5 233 L1506.4 228.6 H1508.3 Z" fill="#28e890"/><path d="M1854.0 218.7 L1870.6 231.9 M1870.6 218.7 L1854.0 231.9" stroke="#555" stroke-width="1.8"/><rect x="1900.3" y="211.4" width="30.3" height="24.5" fill="#f0f0f0" stroke="#2a2a2a" stroke-width="1.3"/><rect x="1900.3" y="211.4" width="30.3" height="4.2" fill="#12d4f8" stroke="#2a2a2a" stroke-width="1.1"/><ellipse cx="1915.4" cy="226.2" rx="9.9" ry="7.8" fill="#1a1a1a"/><path d="M1913.8 220.8 H1916.0 V223.6 H1918.0 V225.4 H1916.0 V229.2 Q1916.0 230.3 1918.0 230.1 V231.6 H1916.6 Q1913.8 231.6 1913.8 229.6 V225.4 H1912.2 V223.6 H1913.8 Z" fill="#fff"/><path d="M2261.7 218.7 L2278.3 231.9 M2278.3 218.7 L2261.7 231.9" stroke="#555" stroke-width="1.8"/><rect x="2308.0" y="211.4" width="29.3" height="24.5" fill="#f2f2f2" stroke="#2a2a2a" stroke-width="1.3"/><rect x="2308.0" y="211.4" width="29.3" height="4.2" fill="#12d4f8" stroke="#2a2a2a" stroke-width="1.1"/><rect x="2320.5" y="218.2" width="19" height="18.6" rx="1" fill="#fff" stroke="#444" stroke-width="1.3"/><path d="M2323.8 222.5 H2336.2 M2323.8 225.9 H2336.2 M2323.8 229.3 H2336.2 M2323.8 232.6 H2336.2" stroke="#777" stroke-width="1.3"/><path d="M2310.0 217 L2322.0 222.9 L2310.0 228.3 Z" fill="#22e09a" stroke="#1f8a60" stroke-width="0.7" stroke-linejoin="round"/><path d="M2669.4 218.7 L2686.0 231.9 M2686.0 218.7 L2669.4 231.9" stroke="#555" stroke-width="1.8"/><rect x="2715.2" y="211.4" width="30.3" height="24.5" fill="#f2f2f2" stroke="#2a2a2a" stroke-width="1.3"/><rect x="2715.2" y="211.4" width="30.3" height="4.2" fill="#12d4f8" stroke="#2a2a2a" stroke-width="1.1"/><rect x="2715.2" y="218.2" width="18.5" height="18.6" rx="1" fill="#fff" stroke="#444" stroke-width="1.3"/><path d="M2718.4 222.5 H2730.6 M2718.4 225.9 H2730.6 M2718.4 229.3 H2730.6 M2718.4 232.6 H2730.6" stroke="#777" stroke-width="1.3"/><path d="M2733.7 217 L2745.2 222.9 L2733.7 228.3 Z" fill="#22e09a" stroke="#1f8a60" stroke-width="0.7" stroke-linejoin="round"/><rect x="609.5" y="717.6" width="7" height="8.5" rx="2" fill="#d2d2d2"/><rect x="691.5" y="734.8" width="7.5" height="8.6" rx="2" fill="#d2d2d2"/><rect x="1523" y="1237" width="12" height="5" rx="2" fill="#d2d2d2"/><rect x="7.2" y="1254.0" width="30.7" height="24.8" fill="#ffffff" stroke="#2a2a2a" stroke-width="1.3"/><rect x="7.2" y="1254.0" width="30.7" height="4.2" fill="#12d4f8" stroke="#2a2a2a" stroke-width="1.1"/><rect x="11.6" y="1260.8" width="22.0" height="15.9" rx="1.2" fill="#fafcff" stroke="#8e8e8e" stroke-width="1.4"/><rect x="15.2" y="1262.6" width="2.9" height="1.9" rx="0.9" fill="#1f7a90"/><rect x="20.7" y="1262.6" width="8.9" height="1.9" rx="0.9" fill="#333"/><rect x="15.2" y="1266.2" width="2.9" height="1.9" rx="0.9" fill="#1f7a90"/><rect x="20.7" y="1266.2" width="8.9" height="1.9" rx="0.9" fill="#333"/><rect x="15.2" y="1269.8" width="2.9" height="1.9" rx="0.9" fill="#1f7a90"/><rect x="20.7" y="1269.8" width="8.9" height="1.9" rx="0.9" fill="#333"/><rect x="15.2" y="1273.4" width="2.9" height="1.9" rx="0.9" fill="#1f7a90"/><rect x="20.7" y="1273.4" width="8.9" height="1.9" rx="0.9" fill="#333"/><path d="M2902.3 1258 H2917 L2924 1264.5 V1274.7 L2917 1281.2 H2902.3 L2895.3 1274.7 V1264.5 Z" fill="#3e3e3e"/><rect x="2902.3" y="1264" width="14.6" height="11.6" fill="#555" stroke="#fff" stroke-width="1.6"/><ellipse cx="2971" cy="1269.6" rx="14.4" ry="11.6" fill="#3e3e3e"/><rect x="2963.2" y="1269" width="10.5" height="6.8" fill="#555" stroke="#fff" stroke-width="1.4"/><path d="M2966.7 1267.5 V1265 H2978.2 V1271.5 H2974.7" fill="none" stroke="#fff" stroke-width="1.4"/></svg>
<div class="t" style="left:1631.80px;top:58.15px;font:normal 22.50px/22.50px 'Liberation Sans', sans-serif;color:#1c1c1c;letter-spacing:1.691px;transform:scaleX(1.1000);transform-origin:0 0;-webkit-text-stroke:0.45px #1c1c1c;">No debugger</div>
</body></html>
